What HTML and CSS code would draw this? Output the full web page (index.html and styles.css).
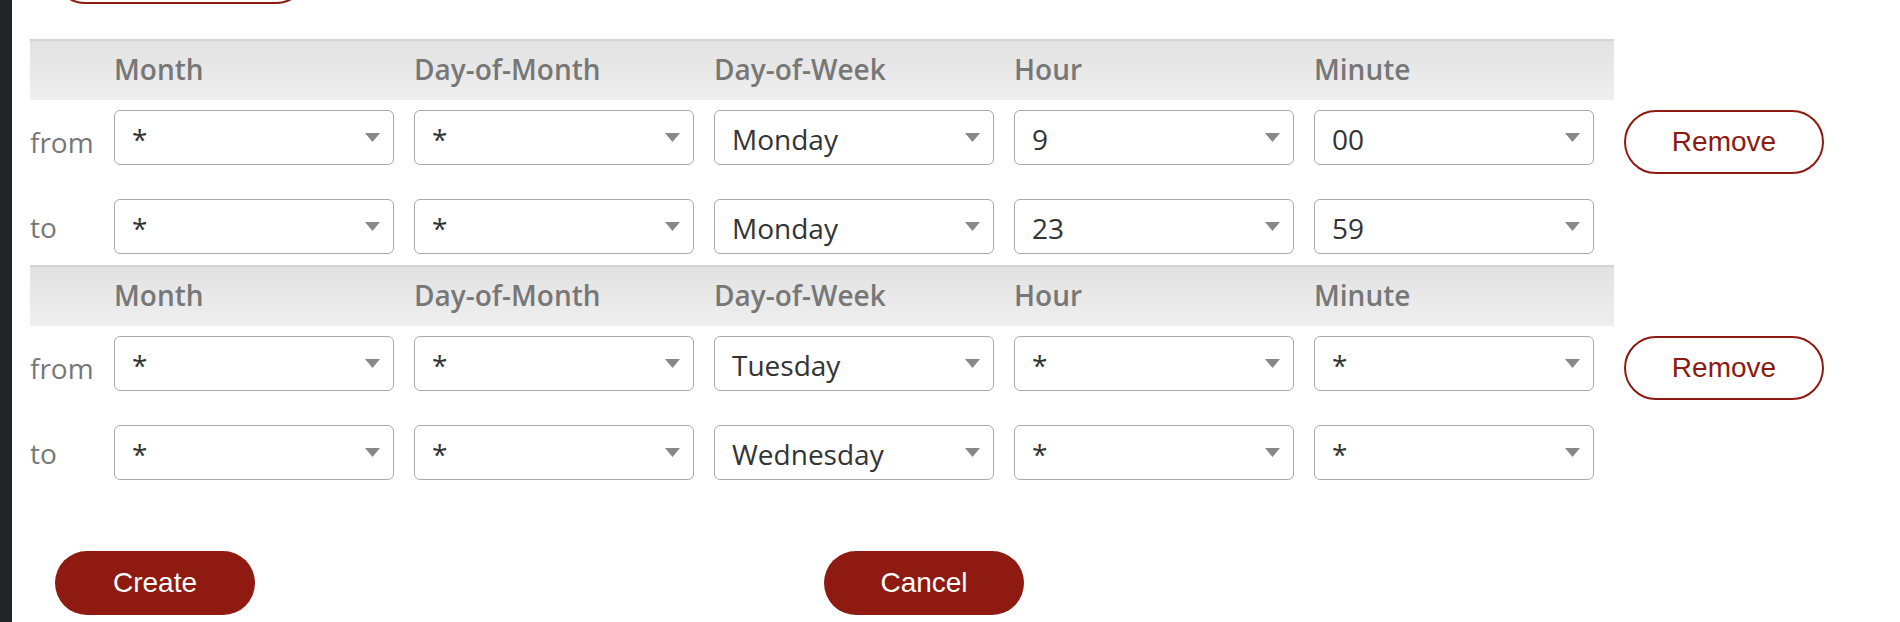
FILE: index.html
```html
<!DOCTYPE html>
<html lang="en">
<head>
  <meta charset="UTF-8" />
  <meta name="viewport" content="width=device-width, initial-scale=1" />
  <title>Schedule rules</title>
  <link rel="stylesheet" href="styles.css">
</head>
<body>
  <div class="sidebar"></div>

  <main class="content">
    <button class="btn-outline btn-prev" aria-label="Add rule"></button>

    <!-- rule 1 -->
    <section class="rule">
      <div class="rule-head">
        <span></span>
        <span>Month</span>
        <span>Day-of-Month</span>
        <span>Day-of-Week</span>
        <span>Hour</span>
        <span>Minute</span>
      </div>
      <div class="rule-row row-from">
        <label class="row-label">from</label>
        <div class="select-wrap"><select class="field"><option>*</option></select><svg class="arrow" viewBox="0 0 15 9"><path d="M0 0h15L7.5 9z"/></svg></div>
        <div class="select-wrap"><select class="field"><option>*</option></select><svg class="arrow" viewBox="0 0 15 9"><path d="M0 0h15L7.5 9z"/></svg></div>
        <div class="select-wrap"><select class="field"><option>Monday</option></select><svg class="arrow" viewBox="0 0 15 9"><path d="M0 0h15L7.5 9z"/></svg></div>
        <div class="select-wrap"><select class="field"><option>9</option></select><svg class="arrow" viewBox="0 0 15 9"><path d="M0 0h15L7.5 9z"/></svg></div>
        <div class="select-wrap"><select class="field"><option>00</option></select><svg class="arrow" viewBox="0 0 15 9"><path d="M0 0h15L7.5 9z"/></svg></div>
        <button class="btn-outline btn-remove">Remove</button>
      </div>
      <div class="rule-row row-to">
        <label class="row-label">to</label>
        <div class="select-wrap"><select class="field"><option>*</option></select><svg class="arrow" viewBox="0 0 15 9"><path d="M0 0h15L7.5 9z"/></svg></div>
        <div class="select-wrap"><select class="field"><option>*</option></select><svg class="arrow" viewBox="0 0 15 9"><path d="M0 0h15L7.5 9z"/></svg></div>
        <div class="select-wrap"><select class="field"><option>Monday</option></select><svg class="arrow" viewBox="0 0 15 9"><path d="M0 0h15L7.5 9z"/></svg></div>
        <div class="select-wrap"><select class="field"><option>23</option></select><svg class="arrow" viewBox="0 0 15 9"><path d="M0 0h15L7.5 9z"/></svg></div>
        <div class="select-wrap"><select class="field"><option>59</option></select><svg class="arrow" viewBox="0 0 15 9"><path d="M0 0h15L7.5 9z"/></svg></div>
      </div>
    </section>

    <!-- rule 2 -->
    <section class="rule">
      <div class="rule-head">
        <span></span>
        <span>Month</span>
        <span>Day-of-Month</span>
        <span>Day-of-Week</span>
        <span>Hour</span>
        <span>Minute</span>
      </div>
      <div class="rule-row row-from">
        <label class="row-label">from</label>
        <div class="select-wrap"><select class="field"><option>*</option></select><svg class="arrow" viewBox="0 0 15 9"><path d="M0 0h15L7.5 9z"/></svg></div>
        <div class="select-wrap"><select class="field"><option>*</option></select><svg class="arrow" viewBox="0 0 15 9"><path d="M0 0h15L7.5 9z"/></svg></div>
        <div class="select-wrap"><select class="field"><option>Tuesday</option></select><svg class="arrow" viewBox="0 0 15 9"><path d="M0 0h15L7.5 9z"/></svg></div>
        <div class="select-wrap"><select class="field"><option>*</option></select><svg class="arrow" viewBox="0 0 15 9"><path d="M0 0h15L7.5 9z"/></svg></div>
        <div class="select-wrap"><select class="field"><option>*</option></select><svg class="arrow" viewBox="0 0 15 9"><path d="M0 0h15L7.5 9z"/></svg></div>
        <button class="btn-outline btn-remove">Remove</button>
      </div>
      <div class="rule-row row-to">
        <label class="row-label">to</label>
        <div class="select-wrap"><select class="field"><option>*</option></select><svg class="arrow" viewBox="0 0 15 9"><path d="M0 0h15L7.5 9z"/></svg></div>
        <div class="select-wrap"><select class="field"><option>*</option></select><svg class="arrow" viewBox="0 0 15 9"><path d="M0 0h15L7.5 9z"/></svg></div>
        <div class="select-wrap"><select class="field"><option>Wednesday</option></select><svg class="arrow" viewBox="0 0 15 9"><path d="M0 0h15L7.5 9z"/></svg></div>
        <div class="select-wrap"><select class="field"><option>*</option></select><svg class="arrow" viewBox="0 0 15 9"><path d="M0 0h15L7.5 9z"/></svg></div>
        <div class="select-wrap"><select class="field"><option>*</option></select><svg class="arrow" viewBox="0 0 15 9"><path d="M0 0h15L7.5 9z"/></svg></div>
      </div>
    </section>

    <div class="actions">
      <div><button class="btn-fill">Create</button></div>
      <div><button class="btn-fill">Cancel</button></div>
    </div>
  </main>
</body>
</html>
```

FILE: styles.css
```css
html, body {
  margin: 0;
  height: 100%;
  overflow: hidden;
}
body {
  display: flex;
  background: white;
  font-family: "Open Sans", "Noto Sans", sans-serif;
}
.sidebar {
  width: 12px;
  flex-shrink: 0;
  background: #212429;
}
.content {
  padding-left: 18px;
}

/* buttons */
.btn-outline, .btn-fill {
  font-family: "Liberation Sans", Arial, sans-serif;
  font-size: 28px;
  height: 64px;
  padding-bottom: 2px;
  border-radius: 32px;
  cursor: pointer;
}
.btn-outline {
  background: white;
  color: #8c1a10;
  border: 2px solid #8c1a10;
}
.btn-fill {
  width: 200px;
  background: #8e1a11;
  color: white;
  border: none;
  margin-left: 25px;
}
.btn-prev {
  display: block;
  width: 255px;
  margin: -60px 0 35px 23px;
}
.btn-remove {
  width: 200px;
  margin-left: 10px;
}

/* rule table */
.rule-head, .rule-row {
  display: grid;
  grid-template-columns: 84px repeat(5, 300px) auto;
}
.rule-head {
  width: 1584px;
  height: 56px;
  padding-bottom: 3px;
  align-items: center;
  border-top: 2px solid #d3d3d3;
  background: linear-gradient(#e2e2e2, #efefef);
  font-size: 28px;
  font-weight: 600;
  color: #777;
}
.rule-row {
  align-items: start;
}
.row-from {
  padding: 10px 0 15px;
}
.row-to {
  padding: 10px 0 11px;
}
.row-label {
  align-self: center;
  font-size: 28px;
  color: #777;
}

.select-wrap {
  position: relative;
  width: 280px;
}
.field {
  appearance: none;
  -webkit-appearance: none;
  width: 280px;
  height: 55px;
  padding: 2px 40px 0 17px;
  border: 1px solid #aaa;
  border-radius: 6px;
  background: white;
  font-family: "Open Sans", "Noto Sans", sans-serif;
  font-size: 28px;
  color: #333;
}
.arrow {
  position: absolute;
  right: 14px;
  top: 23px;
  width: 15px;
  height: 9px;
  fill: #888;
  pointer-events: none;
}

.actions {
  display: grid;
  grid-template-columns: 769px 769px;
  margin-top: 60px;
}
```
